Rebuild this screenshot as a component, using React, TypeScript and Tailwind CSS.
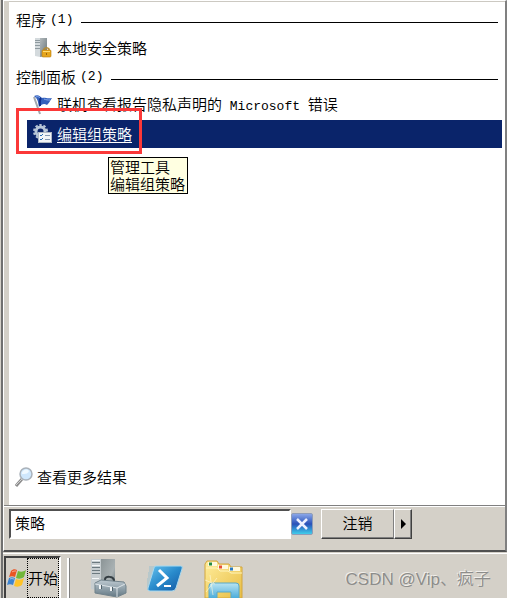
import { ReactNode } from "react";

interface RowProps {
  icon: ReactNode;
  children: ReactNode;
}

const ServerLockIcon = () => (
  <svg width="20" height="22" viewBox="0 0 20 22" className="shrink-0">
    <defs>
      <linearGradient id="tower" x1="0" x2="1" y1="0" y2="1">
        <stop offset="0" stopColor="#b3babd" />
        <stop offset="1" stopColor="#68757a" />
      </linearGradient>
    </defs>
    <path d="M2 1h5v19l-5-1z" fill="#d4dadd" />
    <path d="M7 1h7v18l-7 1z" fill="url(#tower)" />
    <path d="M2 3.5h5M2 5.5h5M2 8.5h5M2 11.5h5" stroke="#8f9a9f" />
    <path d="M11 13v-1a3 3 0 0 1 5 0v1" fill="none" stroke="#b58a31" strokeWidth="1.5" />
    <rect x="9" y="13" width="9" height="7" rx="1" fill="#e5a51c" stroke="#b97808" strokeWidth=".6" />
    <path d="M10 14.5h7" stroke="#ffdc72" />
    <path d="M13.5 16v2" stroke="#9a6409" />
  </svg>
);

const FlagIcon = () => (
  <svg width="20" height="22" viewBox="0 0 20 22" className="shrink-0">
    <path d="M1 3l6 17" stroke="#a3a8ad" strokeWidth="2" />
    <path d="M1 2c4-2 6 0 8 2 3-1 5 1 10 0-2 3-3 5-5 7-3-2-5-1-8 2-1-5-1-8-5-11z" fill="#3461bd" />
    <path d="M8 4c-2 2-1 5-1 8" fill="none" stroke="#102f8b" strokeWidth="2" />
    <path d="M3 3c2-1 3 0 4 1M11 5c2 1 4 1 6 1" fill="none" stroke="#85a9ed" />
  </svg>
);

const GearIcon = () => (
  <svg width="20" height="22" viewBox="0 0 20 22" className="shrink-0">
    <circle cx="7.5" cy="8.5" r="6.5" fill="none" stroke="#b9c6d6" strokeWidth="2" strokeDasharray="2.4 1.7" />
    <circle cx="7.5" cy="8.5" r="4.5" fill="none" stroke="#b7c6d8" strokeWidth="3" />
    <rect x="5.5" y="9.5" width="13" height="10" fill="#f1f4f7" stroke="#aeb8c4" />
    <path d="M7 12l1 1 2-2M7 16l1 1 2-2" fill="none" stroke="#256bb2" />
    <path d="M12 12.5h5M12 16.5h5" stroke="#8499b3" />
  </svg>
);

const SearchIcon = () => (
  <svg width="18" height="20" viewBox="0 0 18 20" className="shrink-0">
    <path d="M7 12l-6 7" stroke="#8d8d8d" strokeWidth="3" />
    <path d="M7 12l-6 6" stroke="#d0d0d0" />
    <circle cx="11" cy="7" r="6" fill="#cfe7fc" stroke="#aab2ba" strokeWidth="1.5" />
    <path d="M7 7a4 4 0 0 1 7-3c-1 3-4 3-7 3z" fill="#f0f9ff" />
  </svg>
);

const WindowsIcon = () => (
  <svg width="20" height="20" viewBox="0 0 20 20" className="shrink-0">
    <path d="M4 3c2-2 4-2 6-1L8 9C6 8 4 8 2 9z" fill="#ea5424" />
    <path d="M11 3c3 1 5 1 8-1l-2 7c-3 2-5 2-8 1z" fill="#72b739" />
    <path d="M2 10c2-1 4-1 6 0l-2 7c-2-1-4-1-6 0z" fill="#3c83d0" />
    <path d="M9 11c3 1 5 1 8-1l-2 7c-3 2-5 2-8 1z" fill="#ffc328" />
    <path d="M5 4c1-1 3-1 4-1M3 11c2-1 3 0 4 0" fill="none" stroke="#fff" strokeOpacity=".5" />
  </svg>
);

const ToolboxIcon = () => (
  <svg width="38" height="40" viewBox="0 0 38 40">
    <defs>
      <linearGradient id="server" x2="1" y2="1">
        <stop stopColor="#8b9496" />
        <stop offset=".6" stopColor="#a9b1b3" />
        <stop offset="1" stopColor="#66757b" />
      </linearGradient>
      <linearGradient id="box" x2="0" y2="1">
        <stop stopColor="#bdc9d1" />
        <stop offset="1" stopColor="#647984" />
      </linearGradient>
    </defs>
    <path d="M11 1h14v33H11z" fill="url(#server)" />
    <path d="M1 1h10v32L1 31z" fill="#c6cdd0" />
    <path d="M2 4.5h8M2 9.5h8M2 12.5h8M2 15.5h8" stroke="#6c7a80" />
    <path d="M2 2.5h8M2 7.5h8M2 20.5h7" stroke="#f4f7f8" />
    <path d="M15 23v-2c1-3 8-3 9 1v2" fill="none" stroke="#343d42" strokeWidth="2" />
    <path d="M5 25l6-3 23 2 2 4v7l-9 4-22-4z" fill="url(#box)" stroke="#71828b" />
    <path d="M5 26l22 4 8-4M27 30v9" fill="none" stroke="#dce3e7" />
    <path d="M10 27v4M21 29v4" stroke="#f2f5f6" strokeWidth="2" />
    <path d="M11.5 27v4M22.5 29v4" stroke="#4d5f69" />
  </svg>
);

const PowerShellIcon = () => (
  <svg width="38" height="30" viewBox="0 0 38 30">
    <defs>
      <linearGradient id="shell" x2="1" y2="1">
        <stop stopColor="#68c3ee" />
        <stop offset=".5" stopColor="#298bcc" />
        <stop offset="1" stopColor="#1557a2" />
      </linearGradient>
    </defs>
    <path d="M3 5h6M2 11h6M1 17h5M1 23h3" stroke="#86bad3" strokeWidth="6" opacity=".35" />
    <path d="M10 2h25q2 0 1 3l-6 19q-1 3-4 3H4q-3 0-2-3L8 4q0-2 2-2z" fill="url(#shell)" stroke="#a8d9ef" />
    <path d="M13 6l8 8-10 8" fill="none" stroke="#fff" strokeWidth="3" />
    <path d="M18 22h7" stroke="#fff" strokeWidth="2" />
  </svg>
);

const FolderIcon = () => (
  <svg width="40" height="38" viewBox="0 0 40 38">
    <defs>
      <linearGradient id="folder" x2="1" y2="1">
        <stop stopColor="#ffed9c" />
        <stop offset="1" stopColor="#e8bd43" />
      </linearGradient>
      <linearGradient id="stand" x2="0" y2="1">
        <stop stopColor="#b9e4f2" />
        <stop offset="1" stopColor="#45a9d9" />
      </linearGradient>
    </defs>
    <path d="M1 4l2-3h10l2 3h10l2 3h11v31H1z" fill="url(#folder)" stroke="#d3a63d" />
    <path d="M4 2h9v4H4zM14 5h10v4H14zM25 7h11v4H25z" fill="#fff9dd" />
    <path d="M5 4h3" stroke="#258b42" strokeWidth="3" />
    <path d="M15 7h3" stroke="#e65035" strokeWidth="3" />
    <path d="M26 9h3" stroke="#2a7ac3" strokeWidth="3" />
    <path d="M2 8h11l3 3h8l3 2h11" fill="none" stroke="#fff5bc" />
    <path d="M5 39V26q0-3 3-3h24q3 0 3 3v13h-8v-7H13v7z" fill="url(#stand)" stroke="#58a8c8" />
    <path d="M1 20l10 4M6 15l3 20M13 18L2 32" stroke="#fffbe0" opacity=".6" />
  </svg>
);

const GroupTitle = ({ name, count }: { name: string; count: number }) => (
  <h2 className="flex h-7 items-center gap-1 px-[7px]">
    <span>{name}</span>
    <span className="mr-1 font-['Liberation_Mono',monospace] text-[13px]">({count})</span>
    <span className="mt-1 h-px flex-1 bg-black" />
  </h2>
);

const ResultRow = ({ icon, children }: RowProps) => (
  <a href="#" className="mr-[3px] ml-[18px] flex h-7 items-center gap-1 pl-1.5">
    {icon}
    <span>{children}</span>
  </a>
);

const App = () => {
  return (
    <div className="min-h-screen bg-[#d4d0c8] pl-px font-['Noto_Sans_CJK_SC',sans-serif] text-[15px] leading-[18px] font-[350] text-black">
      <div className="flex min-h-screen flex-col border-l-2 border-[#707070]">
        <main className="flex flex-1 flex-col border-t border-r-2 border-b-2 border-l border-t-white border-r-[#808080] border-b-[#505050] border-l-white">
          <section className="ml-[5px] flex flex-1 flex-col gap-px border-t border-[#ccc9c2] bg-white pt-1">
            <div>
              <GroupTitle name="程序" count={1} />
              <ResultRow icon={<ServerLockIcon />}>本地安全策略</ResultRow>
            </div>
            <div>
              <GroupTitle name="控制面板" count={2} />
              <ResultRow icon={<FlagIcon />}>
                联机查看报告隐私声明的
                <span className="font-['Liberation_Mono',monospace] text-[13px] whitespace-pre"> Microsoft </span>
                错误
              </ResultRow>
            </div>
            <div className="relative">
              <div className="mr-[3px] ml-[18px] bg-[#0a246a] text-white">
                <a href="#" className="flex h-7 items-center gap-1 pl-1.5">
                  <GearIcon />
                  <span className="underline decoration-1 underline-offset-2">编辑组策略</span>
                </a>
              </div>
              <div className="pointer-events-none absolute -top-3 left-[7px] h-[46px] w-[126px] border-3 border-[#fb3838]" />
              <div
                role="tooltip"
                className="absolute top-[37px] left-[99px] border border-black bg-[#ffffe1] pr-0.5 pb-px pl-px leading-[17px] whitespace-pre"
              >
                {"管理工具\n编辑组策略"}
              </div>
            </div>
            <a href="#" className="mt-auto mb-[18px] flex items-center gap-1 pl-1.5">
              <SearchIcon />
              <span>查看更多结果</span>
            </a>
          </section>

          <form className="flex items-start border-t border-[#808080] pb-[11px] pl-[5px] shadow-[inset_0_1px_#fff]">
            <div className="mt-[3px] flex flex-1 items-center">
              <input
                type="text"
                aria-label="搜索"
                defaultValue="策略"
                className="h-[30px] w-full max-w-[282px] border-2 border-t-[#505050] border-r-white border-b-white border-l-[#505050] bg-white px-1 pb-1 outline-none"
              />
              <button
                type="button"
                aria-label="清除"
                className="flex h-[22px] w-[22px] shrink-0 items-center justify-center rounded-xs border border-[#8e9cb8] bg-linear-to-b from-[#8aa6e8] via-[#2b50b8] to-[#41cdea]"
              >
                <svg width="12" height="12" viewBox="0 0 12 12">
                  <path d="M1 1l10 10M11 1L1 11" stroke="#eef1ff" strokeWidth="2.5" />
                </svg>
              </button>
              <div className="ml-2 flex h-[30px] shrink-0">
                <button
                  type="button"
                  className="w-[73px] border border-t-white border-r-[#808080] border-b-[#404040] border-l-white pb-0.5 shadow-[inset_0_-1px_#808080]"
                >
                  注销
                </button>
                <button
                  type="button"
                  aria-label="更多"
                  className="flex w-[18px] items-center justify-center border border-t-white border-r-[#404040] border-b-[#404040] border-l-white shadow-[inset_-1px_-1px_#808080]"
                >
                  <svg width="5" height="10" viewBox="0 0 5 10">
                    <path d="M0 0l5 5-5 5z" />
                  </svg>
                </button>
              </div>
            </div>
          </form>
        </main>

        <footer className="mt-px flex h-[45px] items-start overflow-hidden border-t border-white pt-0.5 pl-px">
          <button
            type="button"
            className="flex h-12 items-center border-2 border-t-[#404040] border-r-white border-b-white border-l-[#404040] pb-1 pl-px"
          >
            <WindowsIcon />
            <span className="flex h-10 items-center border border-dotted border-black">开始</span>
          </button>
          <div className="mt-0.5 ml-1.5 h-12 w-[3px] border-r border-l-2 border-r-[#808080] border-l-white" />
          <div className="ml-5 flex items-start pt-0.5">
            <button type="button" aria-label="服务器管理器">
              <ToolboxIcon />
            </button>
            <button type="button" aria-label="PowerShell" className="ml-[18px] pt-1.5">
              <PowerShellIcon />
            </button>
            <button type="button" aria-label="文件夹" className="ml-5 pt-0.5">
              <FolderIcon />
            </button>
          </div>
          <p className="mt-3.5 mr-4 ml-auto font-['Liberation_Sans','Noto_Sans_CJK_SC',sans-serif] text-[17px] leading-[20px] whitespace-nowrap text-[#8d8d8b] [text-shadow:-1px_-1px_#f0eeea]">
            CSDN @Vip、疯子
          </p>
        </footer>
      </div>
    </div>
  );
};

export default App;
